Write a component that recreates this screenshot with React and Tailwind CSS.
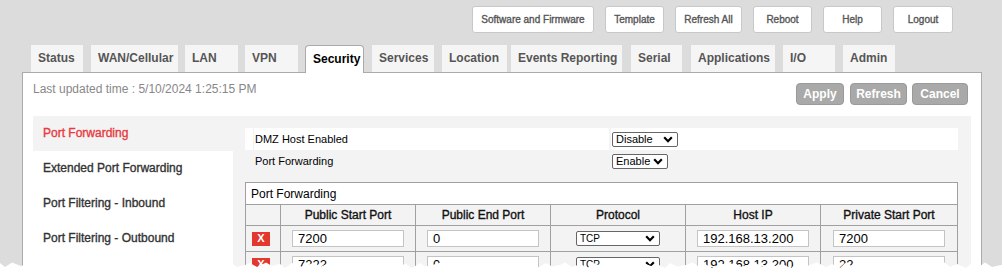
import React from "react";

const topButtons = [
  { label: "Software and Firmware", w: "w-[122px]" },
  { label: "Template", w: "w-[59px]" },
  { label: "Refresh All", w: "w-[67px]" },
  { label: "Reboot", w: "w-[59px]" },
  { label: "Help", w: "w-[59px]" },
  { label: "Logout", w: "w-[60px]" },
];

const tabs = [
  { label: "Status", cls: "ml-[31px] w-[52px]" },
  { label: "WAN/Cellular", cls: "ml-[8px] w-[87px]" },
  { label: "LAN", cls: "ml-[7px] w-[53px]" },
  { label: "VPN", cls: "ml-[7px] w-[53px]" },
  { label: "Security", cls: "ml-[7px] w-[59px]", active: true },
  { label: "Services", cls: "ml-[8px] w-[62px]" },
  { label: "Location", cls: "ml-[8px] w-[65px]" },
  { label: "Events Reporting", cls: "ml-[4px] w-[111px]" },
  { label: "Serial", cls: "ml-[9px] w-[51px]" },
  { label: "Applications", cls: "ml-[9px] w-[84px]" },
  { label: "I/O", cls: "ml-[8px] w-[52px]" },
  { label: "Admin", cls: "ml-[8px] w-[52px]" },
];

const sideItems = [
  "Port Forwarding",
  "Extended Port Forwarding",
  "Port Filtering - Inbound",
  "Port Filtering - Outbound",
  "Inbound Port Filtering Mode",
];

const rows = [
  ["7200", "0", "TCP", "192.168.13.200", "7200"],
  ["7222", "0", "TCP", "192.168.13.200", "22"],
];

function Chevron() {
  return (
    <svg width="10" height="7" viewBox="0 0 10 7" className="shrink-0">
      <path d="M1.2 1.3 L5 5.2 L8.8 1.3" fill="none" stroke="#000" strokeWidth="2.2" strokeLinejoin="miter" />
    </svg>
  );
}

function FakeSelect({ value, w, text }) {
  return (
    <div className={`${w} h-[15px] bg-white border border-[#666] rounded-[2px] flex items-center justify-between pl-[3px] pr-[4px] ${text} text-black`}>
      <span className="leading-none">{value}</span>
      <Chevron />
    </div>
  );
}

function TornEdge() {
  const pts = [];
  const ys = [3, 7, 2.5, 6, 4, 8, 3, 6.5, 5, 2.5, 7, 4, 8, 3, 6, 2.5, 7, 5];
  let x = 0;
  let i = 0;
  while (x <= 1010) {
    pts.push(`${x},${ys[i % ys.length]}`);
    x += 5 + ((i * 7) % 5);
    i++;
  }
  const d = `M0,10 L${pts.join(" L")} L1010,10 Z`;
  return (
    <svg className="absolute left-0 bottom-0" width="1002" height="10" viewBox="0 0 1002 10">
      <path d={d} fill="#ffffff" />
    </svg>
  );
}

export default function App() {
  const stroke = "[-webkit-text-stroke:0.35px_currentcolor]";
  return (
    <div className="relative w-[1002px] h-[270px] overflow-hidden bg-[#dcdcdc] font-['Liberation_Sans',Arial,sans-serif]">
      {/* top buttons */}
      <div className="flex justify-end gap-[11px] pt-[6px] pr-[49px] h-[45px]">
        {topButtons.map((b) => (
          <div
            key={b.label}
            className={`${b.w} h-[27px] bg-white border border-[#c8c8c8] rounded-[3px] flex items-center justify-center text-[10px] text-[#555] ${stroke}`}
          >
            {b.label}
          </div>
        ))}
      </div>

      {/* tabs */}
      <div className="flex items-end h-[27px] relative z-10">
        {tabs.map((t) =>
          t.active ? (
            <div
              key={t.label}
              className={`${t.cls} h-[28px] -mb-[1px] bg-white border border-b-0 border-[#aaa] rounded-t-[4px] flex items-center pl-[7px] pb-[1px] text-[12px] font-bold text-black`}
            >
              {t.label}
            </div>
          ) : (
            <div
              key={t.label}
              className={`${t.cls} h-[27px] bg-[#f5f5f5] flex items-center pl-[7px] pb-[1px] text-[12px] font-bold text-[#555]`}
            >
              {t.label}
            </div>
          )
        )}
      </div>

      {/* panel */}
      <div className="ml-[22px] w-[960px] h-[200px] bg-white border border-b-0 border-[#aaa]">
        <div className="flex justify-between h-[43px]">
          <div className="pl-[10px] pt-[7px] text-[12px] text-[#888]">Last updated time : 5/10/2024 1:25:15 PM</div>
          <div className="flex pt-[10px] pr-[13px]">
            <div className="w-[48px] h-[22px] bg-[#a9a9a9] border border-[#9a9a9a] rounded-[4px] flex items-center justify-center text-[12px] font-bold text-white">Apply</div>
            <div className="ml-[6px] w-[57px] h-[22px] bg-[#a9a9a9] border border-[#9a9a9a] rounded-[4px] flex items-center justify-center text-[12px] font-bold text-white">Refresh</div>
            <div className="ml-[5px] w-[56px] h-[22px] bg-[#a9a9a9] border border-[#9a9a9a] rounded-[4px] flex items-center justify-center text-[12px] font-bold text-white">Cancel</div>
          </div>
        </div>

        <div className="mx-[10px] w-[938px] h-[160px] bg-[#f3f3f3] flex">
          {/* sidebar */}
          <div className="w-[200px] shrink-0">
            {sideItems.map((s, i) => (
              <div
                key={s}
                className={`h-[35px] flex items-center pl-[10px] pb-[1px] text-[12px] ${stroke} ${
                  i === 0 ? "text-[#e8393f]" : "bg-white text-[#333]"
                }`}
              >
                {s}
              </div>
            ))}
          </div>

          {/* content */}
          <div className="flex-1 pl-[12px] pt-[12px] pr-[13px]">
            <div className="flex h-[22px]">
              <div className="w-[8px] bg-white" />
              <div className="ml-[1px] w-[355px] bg-white flex items-center pl-[1px] text-[11px] text-black">DMZ Host Enabled</div>
              <div className="ml-[2px] flex-1 bg-white flex items-center pl-[1px]">
                <FakeSelect value="Disable" w="w-[66px]" text="text-[11px]" />
              </div>
            </div>
            <div className="flex h-[22px]">
              <div className="w-[8px]" />
              <div className="ml-[1px] w-[355px] flex items-center pl-[1px] text-[11px] text-black">Port Forwarding</div>
              <div className="ml-[2px] flex-1 flex items-center pl-[1px]">
                <FakeSelect value="Enable" w="w-[56px]" text="text-[11px]" />
              </div>
            </div>

            <div className="mt-[10px] w-[713px] border border-[#a0a0a0] border-b-0">
              <div className="h-[21px] bg-white flex items-center pl-[5px] text-[12px] text-black">Port Forwarding</div>
              <div className="grid grid-cols-[34px_135px_135px_135px_135px_1fr] h-[21px] border-t border-[#a0a0a0] bg-[#f3f3f3]">
                <div />
                {["Public Start Port", "Public End Port", "Protocol", "Host IP", "Private Start Port"].map((h) => (
                  <div key={h} className={`border-l border-[#a0a0a0] flex items-center justify-center text-[12px] text-[#111] ${stroke}`}>
                    {h}
                  </div>
                ))}
              </div>
              {rows.map((r, ri) => (
                <div key={ri} className="grid grid-cols-[34px_135px_135px_135px_135px_1fr] h-[26px] border-t border-[#a0a0a0] bg-[#f3f3f3]">
                  <div className="flex items-center pl-[6px]">
                    <div className="w-[18px] h-[14px] bg-[#e2382d] flex items-center justify-center text-[11px] font-bold text-white leading-none">X</div>
                  </div>
                  {r.map((v, ci) => (
                    <div key={ci} className="border-l border-[#a0a0a0] flex items-center justify-center">
                      {ci === 2 ? (
                        <FakeSelect value={v} w="w-[84px]" text="text-[10px]" />
                      ) : (
                        <div className="w-[112px] h-[17px] bg-white border border-[#c4c4c4] flex items-center pl-[5px] text-[13px] text-black leading-none">
                          {v}
                        </div>
                      )}
                    </div>
                  ))}
                </div>
              ))}
            </div>
          </div>
        </div>
      </div>

      <TornEdge />
    </div>
  );
}
